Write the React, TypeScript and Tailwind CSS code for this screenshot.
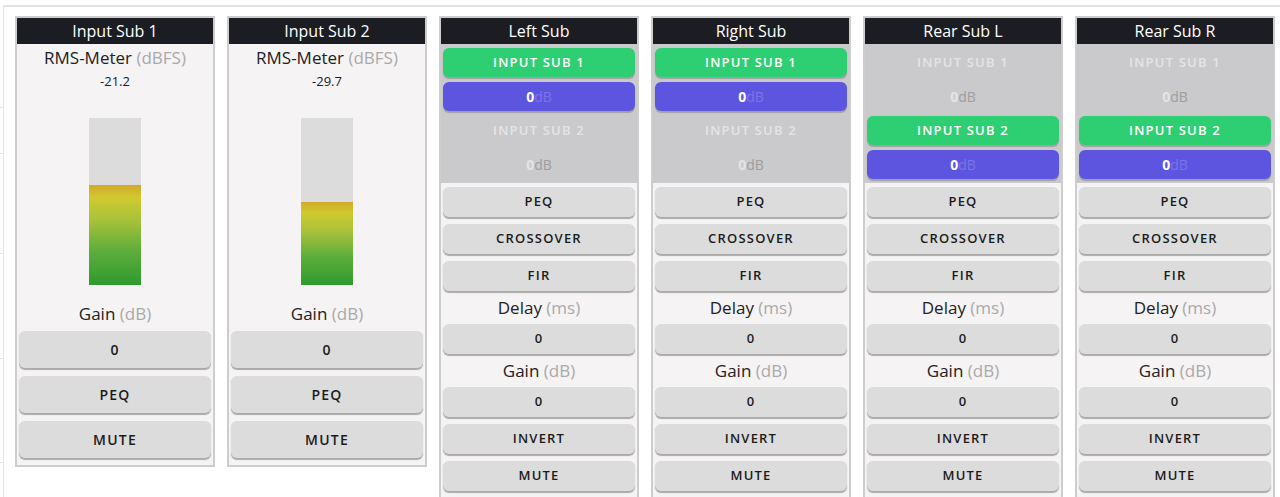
import React from 'react';

const FONT = { fontFamily: '"Open Sans", "Noto Sans", sans-serif' };

type InputDef = { title: string; value: string; level: number };
type OutputDef = { title: string; source: 1 | 2 };

const inputs: InputDef[] = [
  { title: 'Input Sub 1', value: '-21.2', level: 100 },
  { title: 'Input Sub 2', value: '-29.7', level: 83 },
];

const outputs: OutputDef[] = [
  { title: 'Left Sub', source: 1 },
  { title: 'Right Sub', source: 1 },
  { title: 'Rear Sub L', source: 2 },
  { title: 'Rear Sub R', source: 2 },
];

function Header({ title }: { title: string }) {
  return (
    <div className="shrink-0 h-[26px] bg-[#1c1d22] text-white text-[16px] leading-[26px] text-center">
      {title}
    </div>
  );
}

function Btn({ label, tall, className = '' }: { label: string; tall?: boolean; className?: string }) {
  return (
    <div
      className={`shrink-0 mx-[2px] ${tall ? 'h-[37px] text-[14px]' : 'h-[30px] text-[13px]'} flex items-center justify-center rounded-md bg-[#dcdcdc] shadow-[0_1.5px_1px_rgba(0,0,0,0.3)] font-semibold tracking-[1.2px] text-[#1b1b1b] ${className}`}
    >
      {label}
    </div>
  );
}

function Label({ name, unit, className = '' }: { name: string; unit: string; className?: string }) {
  return (
    <div className={`shrink-0 text-center text-[17px] text-[#222] ${className}`}>
      {name} <span className="text-[#a9a9a9]">({unit})</span>
    </div>
  );
}

function InputPanel({ def }: { def: InputDef }) {
  return (
    <div className="shrink-0 w-[200px] h-[451px] border-2 border-[#cdcdcd] bg-[#f5f3f4] flex flex-col">
      <Header title={def.title} />
      <Label name="RMS-Meter" unit="dBFS" className="mt-[1px] h-[26px] leading-[26px]" />
      <div className="text-center text-[13px] leading-[16px] text-[#1b1b1b] mt-[2px]">{def.value}</div>
      <div className="shrink-0 mx-auto mt-[29px] w-[52px] h-[167px] bg-[#dcdcdc] flex flex-col justify-end">
        <div
          className="w-full bg-[linear-gradient(to_bottom,#d5a72a_0%,#d0b82c_6%,#cfca2f_13%,#a9c13a_35%,#5fae3c_65%,#2f9a2e_100%)]"
          style={{ height: `${def.level}px` }}
        />
      </div>
      <Label name="Gain" unit="dB" className="mt-[15px] h-[28px] leading-[28px]" />
      <Btn label="0" tall className="mt-[3px]" />
      <Btn label="PEQ" tall className="mt-[8px]" />
      <Btn label="MUTE" tall className="mt-[8px]" />
    </div>
  );
}

function Route({ label, active }: { label: string; active: boolean }) {
  return (
    <>
      <div
        className={`mx-[2px] h-[29px] flex items-center justify-center rounded-md text-[13px] font-semibold tracking-[1.2px] ${
          active ? 'bg-[#2ecf72] text-white shadow-[0_1.5px_1px_rgba(0,0,0,0.2)]' : 'text-[#e4e4e6]'
        }`}
      >
        {label}
      </div>
      <div
        className={`mx-[2px] h-[29px] flex items-center justify-center rounded-md text-[14px] ${
          active ? 'bg-[#5d55e0] shadow-[0_1.5px_1px_rgba(0,0,0,0.2)]' : ''
        }`}
      >
        <span className={`font-bold ${active ? 'text-white' : 'text-[#e4e4e6]'}`}>0</span>
        <span className={active ? 'text-[#7b74e8]' : 'text-[#9d9d9f]'}>dB</span>
      </div>
    </>
  );
}

function OutputPanel({ def }: { def: OutputDef }) {
  return (
    <div className="shrink-0 w-[200px] h-[490px] border-2 border-b-0 border-[#cdcdcd] bg-[#f5f3f4] flex flex-col overflow-hidden">
      <Header title={def.title} />
      <div className="shrink-0 bg-[#cacacc] pt-[4px] pb-[4px] flex flex-col gap-[5px]">
        <Route label="INPUT SUB 1" active={def.source === 1} />
        <Route label="INPUT SUB 2" active={def.source === 2} />
      </div>
      <Btn label="PEQ" className="mt-[4px]" />
      <Btn label="CROSSOVER" className="mt-[7px]" />
      <Btn label="FIR" className="mt-[7px]" />
      <Label name="Delay" unit="ms" className="h-[33px] leading-[33px]" />
      <Btn label="0" />
      <Label name="Gain" unit="dB" className="h-[33px] leading-[33px]" />
      <Btn label="0" />
      <Btn label="INVERT" className="mt-[7px]" />
      <Btn label="MUTE" className="mt-[7px]" />
      <Btn label="" className="mt-[6px]" />
    </div>
  );
}

export default function App() {
  return (
    <div className="w-[1280px] h-[497px] overflow-hidden bg-white pt-[5px] pl-[3px]" style={FONT}>
      <div className="relative h-[492px] border-t-2 border-l border-[#e3e3e3] pl-[11px] pt-[9px] flex gap-[12px]">
        {[100, 146, 246, 351, 455].map((y) => (
          <div key={y} className="absolute left-[-4px] w-[3px] h-px bg-[#e3e3e3]" style={{ top: `${y}px` }} />
        ))}
        {inputs.map((d) => (
          <InputPanel key={d.title} def={d} />
        ))}
        {outputs.map((d) => (
          <OutputPanel key={d.title} def={d} />
        ))}
      </div>
    </div>
  );
}
